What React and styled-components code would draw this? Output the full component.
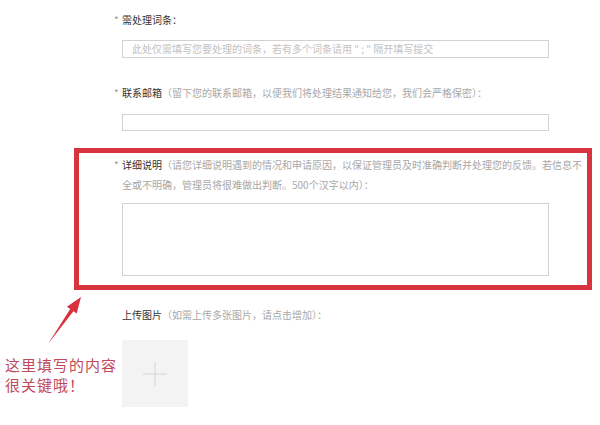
import React from 'react';
import styled, { createGlobalStyle } from 'styled-components';

const GlobalStyle = createGlobalStyle`
  html, body {
    margin: 0;
    padding: 0;
    background: #fff;
  }
  body {
    font-family: "Noto Sans CJK SC", "Liberation Sans", sans-serif;
  }
`;

const Page = styled.div`
  position: relative;
  width: 600px;
  height: 425px;
  overflow: hidden;
  padding-top: 12px;
  box-sizing: border-box;
`;

const Field = styled.div`
  margin-left: 122px;
  margin-top: ${p => p.$top || 0}px;
`;

const Label = styled.div`
  position: relative;
  font-size: 10px;
  line-height: ${p => p.$lh || 16}px;
  color: #333;
  width: ${p => p.$width || 440}px;
  margin-bottom: ${p => p.$gap || 12}px;
  white-space: nowrap;
`;

const Star = styled.span`
  position: absolute;
  left: -8px;
  color: #999;
`;

const Hint = styled.span`
  color: #a8a8a8;
`;

const Input = styled.div`
  width: 427px;
  height: ${p => p.$h}px;
  border: 1px solid #d2d2d2;
  box-sizing: border-box;
  padding-left: 9px;
  font-size: 10px;
  line-height: ${p => p.$h - 2}px;
  color: #c2c2c2;
  white-space: nowrap;
  overflow: hidden;
`;

const Highlight = styled.div`
  margin: 17px 0 0 74px;
  width: 518px;
  border: 5px solid #d7343f;
  box-sizing: border-box;
  padding: 2px 0 9px 43px;
`;

const UploadBox = styled.div`
  width: 66px;
  height: 67px;
  background: #f3f3f3;
  display: flex;
  align-items: center;
  justify-content: center;
`;

const Note = styled.div`
  position: absolute;
  left: 5px;
  top: 355px;
  font-size: 15px;
  line-height: 20px;
  color: #be4a5c;
  letter-spacing: 1px;
`;

const Arrow = styled.svg`
  position: absolute;
  left: 0;
  top: 0;
  pointer-events: none;
`;

const App = () => (
  <Page>
    <GlobalStyle />
    <Field>
      <Label>
        <Star>*</Star>需处理词条：
      </Label>
      <Input $h={18}>此处仅需填写您要处理的词条，若有多个词条请用 " ; " 隔开填写提交</Input>
    </Field>

    <Field $top={27}>
      <Label $gap={13}>
        <Star>*</Star>联系邮箱<Hint>（留下您的联系邮箱，以便我们将处理结果通知给您，我们会严格保密）：</Hint>
      </Label>
      <Input $h={17} />
    </Field>

    <Highlight>
      <Label $lh={20} $width={470} $gap={8}>
        <Star>*</Star>详细说明<Hint>（请您详细说明遇到的情况和申请原因，以保证管理员及时准确判断并处理您的反馈。若信息不
        <br />全或不明确，管理员将很难做出判断。500个汉字以内）：</Hint>
      </Label>
      <Input $h={73} />
    </Highlight>

    <Field $top={17}>
      <Label $gap={17}>
        上传图片<Hint>（如需上传多张图片，请点击增加）：</Hint>
      </Label>
      <UploadBox>
        <svg width="26" height="26" viewBox="0 0 26 26">
          <path d="M13 1v24M1 13h24" stroke="#d4d4d4" strokeWidth="1" fill="none" />
        </svg>
      </UploadBox>
    </Field>

    <Arrow width="120" height="425" viewBox="0 0 120 425">
      <polygon
        points="48,344 70.2,309 66.9,306.7 81,297 76.7,313.6 73.4,311.2"
        fill="#d8323e"
      />
    </Arrow>

    <Note>
      这里填写的内容
      <br />
      很关键哦！
    </Note>
  </Page>
);

export default App;
